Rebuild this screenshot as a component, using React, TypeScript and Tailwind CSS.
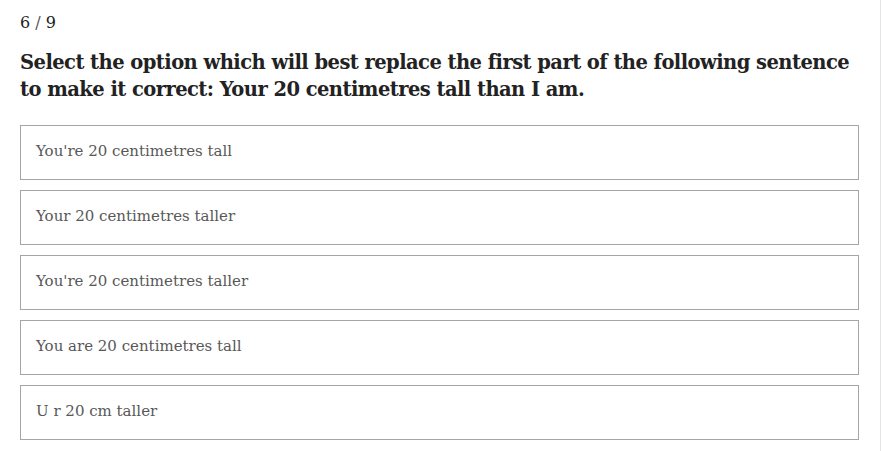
const OPTIONS = [
  "You're 20 centimetres tall",
  "Your 20 centimetres taller",
  "You're 20 centimetres taller",
  "You are 20 centimetres tall",
  "U r 20 cm taller",
];

export default function App() {
  return (
    <div className="h-[451px] w-[881px] bg-white border-r border-[#e4e4e4] font-['DejaVu_Serif',serif]">
      <div className="pl-5 pr-[21px] pt-[12px]">
        <div className="text-[16px] leading-[22px] text-[#222]">
          6 <span className="text-[#555]">/</span> 9
        </div>
        <h1 className="mt-[15px] text-[19.5px] leading-[27px] font-bold tracking-[-0.55px] text-[#222]">
          Select the option which will best replace the first part of the following sentence
          to make it correct: Your 20 centimetres tall than I am.
        </h1>
        <div className="mt-[22px] flex flex-col gap-[10px]">
          {OPTIONS.map((opt) => (
            <button
              key={opt}
              className="h-[55px] w-full border border-[#a3a6a9] px-[15px] pb-[3px] text-left text-[15px] text-[#585858]"
            >
              {opt}
            </button>
          ))}
        </div>
      </div>
    </div>
  );
}
